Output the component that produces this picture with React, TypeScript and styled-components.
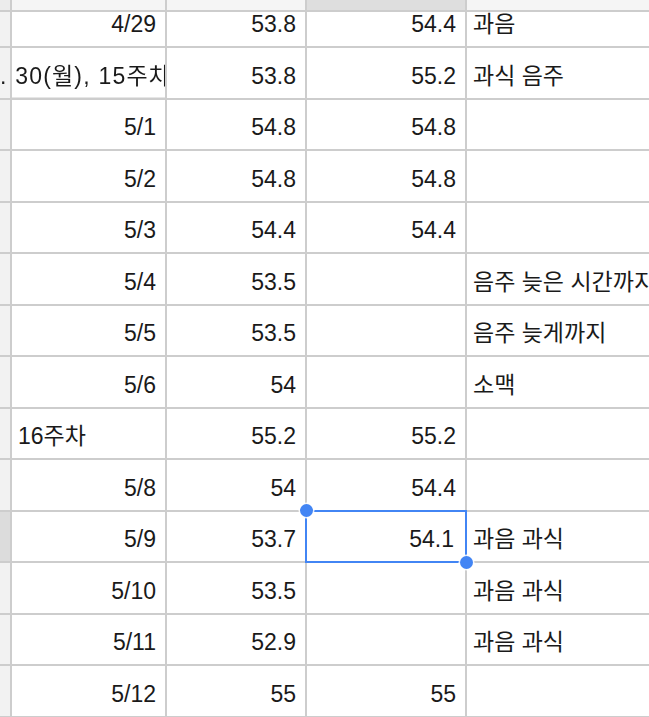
import React from 'react';
import styled, { createGlobalStyle } from 'styled-components';

type Row = {
  date: string;
  weight: string;
  avg: string;
  note: string;
  dateLeft?: boolean;
  bleed?: boolean;
};

const rows: Row[] = [
  { date: '4/29', weight: '53.8', avg: '54.4', note: '과음' },
  { date: '4. 30(월), 15주차', weight: '53.8', avg: '55.2', note: '과식 음주', bleed: true },
  { date: '5/1', weight: '54.8', avg: '54.8', note: '' },
  { date: '5/2', weight: '54.8', avg: '54.8', note: '' },
  { date: '5/3', weight: '54.4', avg: '54.4', note: '' },
  { date: '5/4', weight: '53.5', avg: '', note: '음주 늦은 시간까지' },
  { date: '5/5', weight: '53.5', avg: '', note: '음주 늦게까지' },
  { date: '5/6', weight: '54', avg: '', note: '소맥' },
  { date: '16주차', weight: '55.2', avg: '55.2', note: '', dateLeft: true },
  { date: '5/8', weight: '54', avg: '54.4', note: '' },
  { date: '5/9', weight: '53.7', avg: '54.1', note: '과음 과식' },
  { date: '5/10', weight: '53.5', avg: '', note: '과음 과식' },
  { date: '5/11', weight: '52.9', avg: '', note: '과음 과식' },
  { date: '5/12', weight: '55', avg: '55', note: '' },
];

const SELECTED_ROW = 10;

const App = () => {
  return (
    <>
      <GlobalStyle />
      <Sheet>
        <Corner />
        <ColHeader />
        <ColHeader />
        <ColHeader $active />
        <ColHeader />
        {rows.map((r, i) => {
          const selected = i === SELECTED_ROW;
          return (
            <React.Fragment key={i}>
              <RowHeader $active={selected} />
              <Cell $align={r.dateLeft ? 'left' : 'right'} $bleed={r.bleed}>
                {r.bleed ? <Overflow>{r.date}</Overflow> : r.date}
              </Cell>
              <Cell $align="right">{r.weight}</Cell>
              <Cell $align="right" $selected={selected}>
                {r.avg}
                {selected && (
                  <Selection>
                    <Handle $corner="start" />
                    <Handle $corner="end" />
                  </Selection>
                )}
              </Cell>
              <Cell $align="left">{r.note}</Cell>
            </React.Fragment>
          );
        })}
      </Sheet>
    </>
  );
};

const GlobalStyle = createGlobalStyle`
  html, body {
    margin: 0;
    padding: 0;
    background: #fff;
    overflow: hidden;
  }
  body {
    font-family: "Liberation Sans", Arial, "Noto Sans CJK KR", sans-serif;
    color: #1a1a1a;
  }
`;

const Sheet = styled.div`
  display: grid;
  grid-template-columns: 10px 153px 138px 158px 200px;
  grid-template-rows: 10px 34px repeat(13, 49.5px);
  gap: 2px;
  background: #cdcdcd;
  width: max-content;
  padding-bottom: 2px;
`;

const Corner = styled.div`
  background: #ececec;
`;

const ColHeader = styled.div<{ $active?: boolean }>`
  background: ${(p) => (p.$active ? '#dedede' : '#f5f5f5')};
`;

const RowHeader = styled.div<{ $active?: boolean }>`
  background: ${(p) => (p.$active ? '#dcdcdc' : '#f2f2f2')};
`;

const Cell = styled.div<{
  $align: 'left' | 'right';
  $bleed?: boolean;
  $selected?: boolean;
}>`
  position: relative;
  display: flex;
  align-items: flex-end;
  justify-content: ${(p) => (p.$align === 'right' ? 'flex-end' : 'flex-start')};
  min-width: 0;
  background: #fff;
  font-size: 23px;
  line-height: 26px;
  white-space: nowrap;
  padding: ${(p) => (p.$align === 'right' ? '0 9px 9px 0' : '0 0 9px 6px')};
  overflow: hidden;

  ${(p) =>
    p.$bleed &&
    `
    overflow: visible;
    padding-right: 0;
    clip-path: inset(0 0 0 -200px);
  `}

  ${(p) =>
    p.$selected &&
    `
    overflow: visible;
    padding-right: 11px;
    z-index: 2;
  `}
`;

const Overflow = styled.span`
  flex: none;
  margin-right: -6px;
  letter-spacing: 1.2px;
  will-change: transform;
`;

const Selection = styled.div`
  position: absolute;
  top: -2px;
  left: -2px;
  right: -2px;
  bottom: -2px;
  border: 2px solid #4285f4;
  pointer-events: none;
`;

const Handle = styled.span<{ $corner: 'start' | 'end' }>`
  position: absolute;
  width: 13px;
  height: 13px;
  border-radius: 50%;
  background: #4285f4;
  box-shadow: 0 0 0 1.5px rgba(255, 255, 255, 0.85);
  ${(p) => (p.$corner === 'start' ? 'top: -7.5px; left: -7.5px;' : 'bottom: -7.5px; right: -7.5px;')}
`;

export default App;
